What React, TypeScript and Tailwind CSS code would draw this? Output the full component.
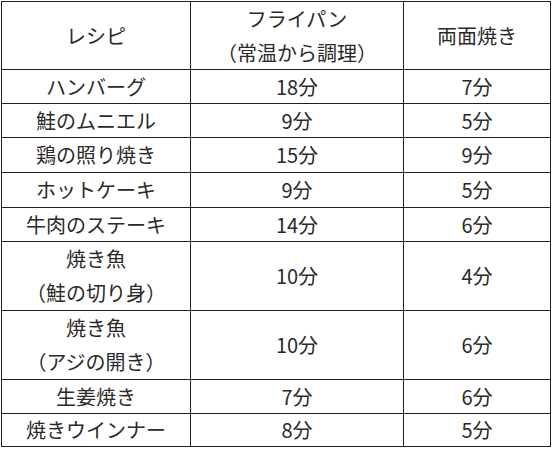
const rows: { name: string[]; pan: string; both: string }[] = [
  { name: ["ハンバーグ"], pan: "18分", both: "7分" },
  { name: ["鮭のムニエル"], pan: "9分", both: "5分" },
  { name: ["鶏の照り焼き"], pan: "15分", both: "9分" },
  { name: ["ホットケーキ"], pan: "9分", both: "5分" },
  { name: ["牛肉のステーキ"], pan: "14分", both: "6分" },
  { name: ["焼き魚", "（鮭の切り身）"], pan: "10分", both: "4分" },
  { name: ["焼き魚", "（アジの開き）"], pan: "10分", both: "6分" },
  { name: ["生姜焼き"], pan: "7分", both: "6分" },
  { name: ["焼きウインナー"], pan: "8分", both: "5分" },
];

function Cell({ lines }: { lines: string[] }) {
  return (
    <div className="flex flex-col items-center justify-center bg-white">
      {lines.map((l, i) => (
        <span key={i} className="leading-[34px] whitespace-nowrap">
          {l}
        </span>
      ))}
    </div>
  );
}

export default function App() {
  return (
    <div className="w-[552px] h-[450px] bg-white p-px">
      <div
        className="grid grid-cols-[188px_212px_146px] grid-rows-[67px_33px_33px_34px_34px_33px_68px_68px_33px_32px] gap-px bg-[#1f1f1f] border border-[#1f1f1f] w-fit text-[20px] text-[#2a2a2a]"
        style={{ fontFamily: '"Noto Sans CJK JP", "Noto Sans", sans-serif' }}
      >
        <Cell lines={["レシピ"]} />
        <Cell lines={["フライパン", "（常温から調理）"]} />
        <Cell lines={["両面焼き"]} />
        {rows.map((r, i) => (
          <div key={i} className="contents">
            <Cell lines={r.name} />
            <Cell lines={[r.pan]} />
            <Cell lines={[r.both]} />
          </div>
        ))}
      </div>
    </div>
  );
}
